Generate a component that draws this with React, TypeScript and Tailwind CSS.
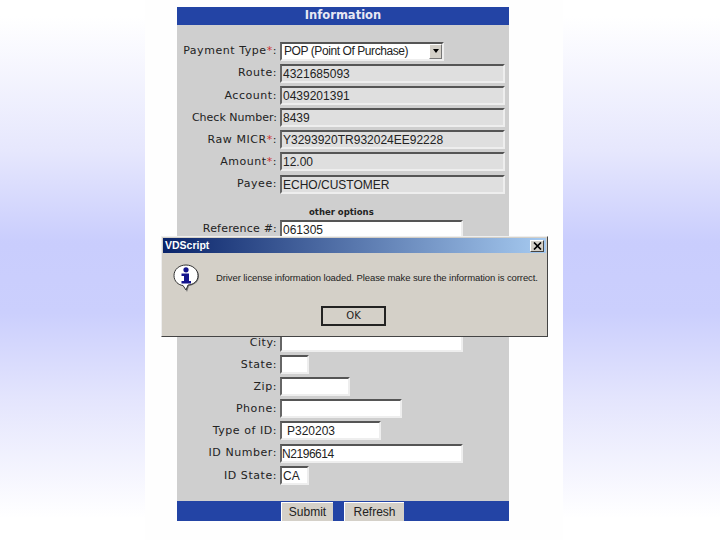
// App.tsx
const Field = ({ label, req, value, width, disabled, pad, track }: { label: string; req?: boolean; value?: string; width: string; disabled?: boolean; pad?: string; track?: string }) => (
    <div className="flex items-center h-[22.17px]">
        <div className={`w-[100px] pt-[1px] text-right text-[11px] text-[#222] font-['DejaVu_Sans',sans-serif] whitespace-nowrap ${track ?? 'tracking-[0.55px]'}`}>
            {label}
            {req && <span className="text-[#c33]">*</span>}:
        </div>
        <div
            className={`ml-[3px] h-[19px] border-2 border-t-[#555] border-l-[#666] border-r-[#eee] border-b-[#eee] text-[12px] leading-[16px] text-[#222] font-['Liberation_Sans',sans-serif] ${width} ${disabled ? 'bg-[#dfdfdf]' : 'bg-white'} ${pad ?? 'pl-[1px]'}`}
        >
            {value}
        </div>
    </div>
);

const InfoIcon = () => (
    <svg className="shrink-0" width="27" height="28" viewBox="0 0 27 28">
        <path d="M14 2C7 2 2 6 2 12S6.500 21.500 11 22L14 28L16 22C22 21 26 17.500 26 12S21 2 14 2Z" fill="#777" />
        <path d="M13 1C6 1 1 5.500 1 11.500S5.500 21 10 21.500L13 26L15 21C21 20.500 25 17 25 11.500S20 1 13 1Z" fill="#fff" stroke="#333" strokeWidth="1" />
        <circle cx="13" cy="5.800" r="2.600" fill="#14148c" />
        <path d="M8.500 9.500H16V17H18V19.500H8.500V17H11V12H8.500Z" fill="#14148c" />
    </svg>
);

const App: React.FC = () => {
    return (
        <main className="relative flex h-[540px] w-[720px] overflow-hidden bg-white">
            <div className="w-[145px] bg-[linear-gradient(to_bottom,#ffffff_3%,#e6e7fd_28%,#c9cdfd_45%,#cbcffd_58%,#e4e5fd_74%,#ffffff_96%)]" />

            <div className="flex-1 pt-[7px] pl-[32px] pr-[54px] bg-[#fefefe]">
                <div className="flex h-[514px] flex-col bg-[#cfcfcf]">
                    <div className="h-[18px] bg-[#2344a5] text-center text-[11.500px] leading-[17px] font-bold text-[#e8e8f4] font-['DejaVu_Sans',sans-serif]">
                        Information
                    </div>

                    <div className="mt-[15px]">
                        <div className="flex items-center h-[22.17px]">
                            <div className="w-[100px] pt-[1px] text-right text-[11px] tracking-[0.55px] text-[#222] font-['DejaVu_Sans',sans-serif] whitespace-nowrap">
                                Payment Type<span className="text-[#c33]">*</span>:
                            </div>
                            <div className="ml-[3px] flex h-[19px] w-[164px] items-center justify-between border-2 border-t-[#555] border-l-[#666] border-r-[#eee] border-b-[#eee] bg-white pl-[2px] text-[12px] tracking-[-0.42px] text-[#222] font-['Liberation_Sans',sans-serif]">
                                POP (Point Of Purchase)
                                <div className="flex h-[15px] w-[13px] items-center justify-center border border-t-white border-l-white border-r-[#777] border-b-[#777] bg-[#d4d0c8]">
                                    <div className="h-0 w-0 border-x-[3.500px] border-t-[4px] border-x-transparent border-t-black" />
                                </div>
                            </div>
                        </div>
                        <Field label="Route" value="4321685093" width="w-[225px]" disabled />
                        <Field label="Account" value="0439201391" width="w-[225px]" disabled />
                        <Field label="Check Number" value="8439" width="w-[225px]" disabled track="tracking-[0px]" />
                        <Field label="Raw MICR" req value="Y3293920TR932024EE92228" width="w-[225px]" disabled />
                        <Field label="Amount" req value="12.00" width="w-[225px]" disabled />
                        <Field label="Payee" value="ECHO/CUSTOMER" width="w-[225px]" disabled />
                    </div>

                    <div className="h-[23px] pt-[11px] pl-[132px] text-[8.500px] leading-[12px] font-bold text-[#222] font-['DejaVu_Sans',sans-serif]">
                        other options
                    </div>
                    <Field label="Reference #" value="061305" width="w-[183px]" track="tracking-[0.2px]" />

                    <div className="h-[91px]" />

                    <Field label="City" width="w-[183px]" />
                    <Field label="State" width="w-[29px]" />
                    <Field label="Zip" width="w-[70px]" />
                    <Field label="Phone" width="w-[122px]" />
                    <Field label="Type of ID" value="P320203" width="w-[101px]" pad="pl-[5px]" />
                    <Field label="ID Number" value="N2196614" width="w-[183px]" pad="pl-[0px] tracking-[-0.45px]" />
                    <Field label="ID State" value="CA" width="w-[29px]" />

                    <div className="mt-auto flex h-[20px] gap-[11px] bg-[#2344a5] pt-[1px] pl-[104px]">
                        <div className="h-[19px] w-[52px] border-t border-l border-white bg-[#d4d0c8] text-center text-[12px] leading-[19px] text-[#222] font-['Liberation_Sans',sans-serif]">
                            Submit
                        </div>
                        <div className="h-[19px] w-[60px] border-t border-l border-white bg-[#d4d0c8] text-center text-[12px] leading-[19px] text-[#222] font-['Liberation_Sans',sans-serif]">
                            Refresh
                        </div>
                    </div>
                </div>
            </div>

            <div className="w-[157px] bg-[linear-gradient(to_bottom,#ffffff_3%,#e6e7fd_28%,#c9cdfd_45%,#cbcffd_58%,#e4e5fd_74%,#ffffff_96%)]" />

            {/* message box sits over the form */}
            <div className="absolute left-[161px] top-[236px] flex h-[101px] w-[387px] flex-col border border-t-[#eee] border-l-[#eee] border-r-[#444] border-b-[#444] bg-[#d4d0c8] p-[1px]">
                <div className="flex h-[15px] items-center justify-between bg-[linear-gradient(to_right,#0a246a,#a6caf0)] pl-[2px] pr-[2px]">
                    <span className="text-[10.500px] font-bold text-white font-['Liberation_Sans',sans-serif]">VDScript</span>
                    <div className="flex h-[12px] w-[14px] items-center justify-center border border-t-white border-l-white border-r-[#444] border-b-[#444] bg-[#d4d0c8]">
                        <svg width="9" height="8" viewBox="0 0 9 8">
                            <path d="M1 0.500L8 7.500M8 0.500L1 7.500" stroke="#000" strokeWidth="1.700" />
                        </svg>
                    </div>
                </div>
                <div className="flex items-start pl-[10px] pt-[11px]">
                    <InfoIcon />
                    <span className="ml-[16px] mt-[7px] whitespace-nowrap text-[9.500px] leading-[14px] tracking-[-0.09px] text-[#222] font-['Liberation_Sans',sans-serif]">
                        Driver license information loaded. Please make sure the information is correct.
                    </span>
                </div>
                <div className="mt-[14px] ml-[158px] h-[20px] w-[65px] border-2 border-[#222] text-center text-[10px] leading-[15px] text-[#222] font-['DejaVu_Sans',sans-serif]">
                    OK
                </div>
            </div>
        </main>
    );
};

export default App;
